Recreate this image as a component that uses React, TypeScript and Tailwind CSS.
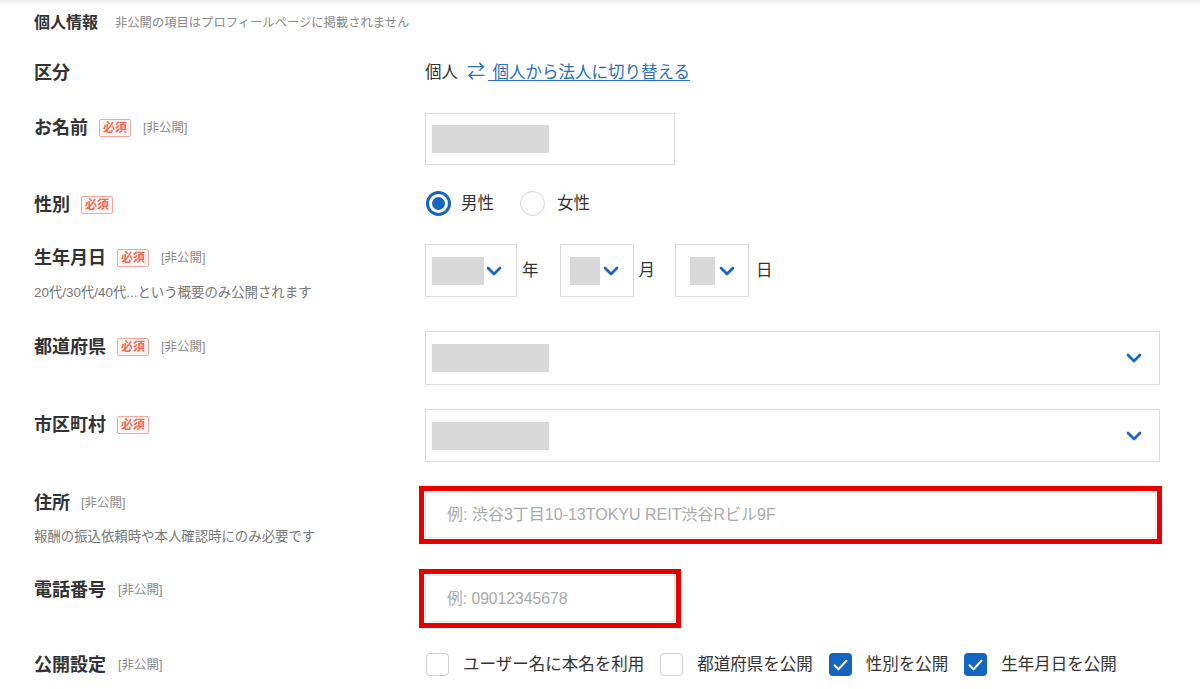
import React from "react";

const Required = () => (
  <span className="ml-[11px] inline-flex h-[18px] items-center rounded-[2px] border border-[#f3a99b] bg-[#fff6f4] px-[3px] text-[12px] font-bold leading-none text-[#ec6a55]">
    必須
  </span>
);

const Private = ({ ml = "ml-[12px]" }: { ml?: string }) => (
  <span className={`${ml} text-[12.5px] leading-none text-[#8a8a8a]`}>[非公開]</span>
);

const Chevron = () => (
  <svg width="16" height="10" viewBox="0 0 16 10" fill="none">
    <path d="M2 2l6 6 6-6" stroke="#1a66c2" strokeWidth="2.8" strokeLinecap="round" strokeLinejoin="round" />
  </svg>
);

const GrayBlock = ({ w }: { w: string }) => <div className={`${w} h-[28px] bg-[#d9d9d9]`} />;

const Label = ({ children, pt }: { children: React.ReactNode; pt: string }) => (
  <div className={`flex items-center ${pt}`}>{children}</div>
);

const Title = ({ children }: { children: React.ReactNode }) => (
  <span className="text-[18px] font-bold leading-[24px] text-[#333]">{children}</span>
);

const Check = ({ on }: { on: boolean }) =>
  on ? (
    <span className="flex h-[23px] w-[23px] items-center justify-center rounded-[4px] bg-[#1565c0]">
      <svg width="15" height="12" viewBox="0 0 15 12" fill="none">
        <path d="M1.5 6.2l4 4 8-8.5" stroke="white" strokeWidth="2" strokeLinecap="round" strokeLinejoin="round" />
      </svg>
    </span>
  ) : (
    <span className="block h-[23px] w-[23px] rounded-[4px] border-[1.5px] border-[#cfcfcf] bg-white" />
  );

export default function App() {
  return (
    <div className="relative min-h-[689px] w-[1200px] bg-white font-['Liberation_Sans','Noto_Sans_CJK_JP',sans-serif] text-[#333]">
      <div className="h-[6px] bg-gradient-to-b from-[#ececec] to-white" />
      <div className="pl-[34px]">
        {/* header */}
        <div className="flex h-[55px] items-start pt-[5px]">
          <span className="text-[16px] font-bold leading-[24px] text-[#333]">個人情報</span>
          <span className="ml-[17px] text-[12.3px] leading-[24px] text-[#8a8a8a]">非公開の項目はプロフィールページに掲載されません</span>
        </div>

        {/* 区分 */}
        <div className="flex h-[52px] items-start">
          <div className="w-[391px]">
            <Title>区分</Title>
          </div>
          <div className="flex items-center text-[16.5px] leading-[22px]">
            <span className="text-[#333]">個人</span>
            <span className="ml-[9px] text-[18px] text-[#2a6fc9]">⇄</span>
            <a className="ml-[3px] whitespace-pre text-[#2a6fc9] underline underline-offset-2">{" 個人から法人に切り替える"}</a>
          </div>
        </div>

        {/* お名前 */}
        <div className="flex h-[78px] items-start">
          <div className="w-[391px]">
            <Label pt="pt-[3px]">
              <Title>お名前</Title>
              <Required />
              <Private />
            </Label>
          </div>
          <div className="flex h-[52px] w-[250px] items-center border border-[#ddd] pl-[6px]">
            <GrayBlock w="w-[117px]" />
          </div>
        </div>

        {/* 性別 */}
        <div className="flex h-[53px] items-start">
          <div className="w-[391px]">
            <Label pt="pt-[2px]">
              <Title>性別</Title>
              <Required />
            </Label>
          </div>
          <div className="flex items-center text-[16.5px] leading-[25px]">
            <span className="ml-[1px] flex h-[25px] w-[25px] items-center justify-center rounded-full border-[3px] border-[#1565c0]">
              <span className="h-[13px] w-[13px] rounded-full bg-[#1565c0]" />
            </span>
            <span className="ml-[10px]">男性</span>
            <span className="ml-[26px] h-[25px] w-[25px] rounded-full border-[1.5px] border-[#d5d5d5]" />
            <span className="ml-[12px]">女性</span>
          </div>
        </div>

        {/* 生年月日 */}
        <div className="flex h-[87px] items-start">
          <div className="w-[391px]">
            <Label pt="pt-[2px]">
              <Title>生年月日</Title>
              <Required />
              <Private />
            </Label>
            <div className="mt-[14px] text-[13.4px] leading-[18px] text-[#777]">20代/30代/40代...という概要のみ公開されます</div>
          </div>
          <div className="flex items-center text-[16.5px]">
            <div className="flex h-[53px] w-[92px] items-center border border-[#ddd] pl-[6px]">
              <GrayBlock w="w-[52px]" />
              <span className="ml-[2px]">
                <Chevron />
              </span>
            </div>
            <span className="ml-[5px]">年</span>
            <div className="ml-[21px] flex h-[53px] w-[74px] items-center border border-[#ddd] pl-[9px]">
              <GrayBlock w="w-[30px]" />
              <span className="ml-[3px]">
                <Chevron />
              </span>
            </div>
            <span className="ml-[5px]">月</span>
            <div className="ml-[20px] flex h-[53px] w-[74px] items-center border border-[#ddd] pl-[14px]">
              <GrayBlock w="w-[25px]" />
              <span className="ml-[4px]">
                <Chevron />
              </span>
            </div>
            <span className="ml-[7px]">日</span>
          </div>
        </div>

        {/* 都道府県 */}
        <div className="flex h-[78px] items-start">
          <div className="w-[391px]">
            <Label pt="pt-[4px]">
              <Title>都道府県</Title>
              <Required />
              <Private />
            </Label>
          </div>
          <div className="flex h-[54px] w-[735px] items-center justify-between border border-[#ddd] pl-[6px] pr-[17px]">
            <GrayBlock w="w-[117px]" />
            <Chevron />
          </div>
        </div>

        {/* 市区町村 */}
        <div className="flex h-[77px] items-start">
          <div className="w-[391px]">
            <Label pt="pt-[4px]">
              <Title>市区町村</Title>
              <Required />
            </Label>
          </div>
          <div className="flex h-[53px] w-[735px] items-center justify-between border border-[#ddd] pl-[6px] pr-[17px]">
            <GrayBlock w="w-[117px]" />
            <Chevron />
          </div>
        </div>

        {/* 住所 */}
        <div className="flex h-[83px] items-start">
          <div className="w-[385px]">
            <Label pt="pt-[5px]">
              <Title>住所</Title>
              <Private ml="ml-[11px]" />
            </Label>
            <div className="mt-[13px] text-[13.4px] leading-[18px] text-[#777]">報酬の振込依頼時や本人確認時にのみ必要です</div>
          </div>
          <div className="h-[58px] w-[743px] border-[5px] border-[#e60000] p-[1px]">
            <div className="flex h-full items-center border border-[#e3e3e3] pl-[21px] text-[16px] text-[#aaa]">
              例: 渋谷3丁目10-13TOKYU REIT渋谷Rビル9F
            </div>
          </div>
        </div>

        {/* 電話番号 */}
        <div className="flex h-[84px] items-start">
          <div className="w-[385px]">
            <Label pt="pt-[9px]">
              <Title>電話番号</Title>
              <Private ml="ml-[12px]" />
            </Label>
          </div>
          <div className="h-[59px] w-[262px] border-[5px] border-[#e60000] p-[1px]">
            <div className="flex h-full items-center border border-[#e3e3e3] pl-[21px] text-[15.7px] text-[#aaa]">
              例: 09012345678
            </div>
          </div>
        </div>

        {/* 公開設定 */}
        <div className="flex h-[36px] items-start">
          <div className="w-[391px]">
            <Label pt="pt-[0px]">
              <Title>公開設定</Title>
              <Private ml="ml-[12px]" />
            </Label>
          </div>
          <div className="flex items-center text-[16.5px] leading-[23px]">
            <span className="ml-[1px]">
              <Check on={false} />
            </span>
            <span className="ml-[14px]">ユーザー名に本名を利用</span>
            <span className="ml-[16px]">
              <Check on={false} />
            </span>
            <span className="ml-[14px]">都道府県を公開</span>
            <span className="ml-[16px]">
              <Check on={true} />
            </span>
            <span className="ml-[14px]">性別を公開</span>
            <span className="ml-[16px]">
              <Check on={true} />
            </span>
            <span className="ml-[14px]">生年月日を公開</span>
          </div>
        </div>
      </div>
    </div>
  );
}
